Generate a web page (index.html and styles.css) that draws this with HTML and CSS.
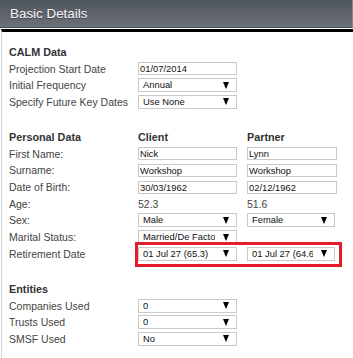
FILE: index.html
```html
<!DOCTYPE html>
<html>
<head>
<meta charset="utf-8">
<link rel="stylesheet" href="styles.css">
</head>
<body>
<div class="panel">
  <div class="hdr">Basic Details</div>
  <div class="content">
    <section class="sec">
      <div class="head">CALM Data</div><div></div><div></div>
      <div class="lbl">Projection Start Date</div><div class="inp">01/07/2014</div><div></div>
      <div class="lbl">Initial Frequency</div><div class="sel"><span class="txt">Annual</span><span class="arr"></span></div><div></div>
      <div class="lbl">Specify Future Key Dates</div><div class="sel"><span class="txt">Use None</span><span class="arr"></span></div><div></div>
    </section>
    <section class="sec">
      <div class="head">Personal Data</div><div class="head">Client</div><div class="head">Partner</div>
      <div class="lbl">First Name:</div><div class="inp">Nick</div><div class="inp p">Lynn</div>
      <div class="lbl">Surname:</div><div class="inp">Workshop</div><div class="inp p">Workshop</div>
      <div class="lbl">Date of Birth:</div><div class="inp">30/03/1962</div><div class="inp p">02/12/1962</div>
      <div class="lbl">Age:</div><div class="lbl">52.3</div><div class="lbl">51.6</div>
      <div class="lbl">Sex:</div><div class="sel"><span class="txt">Male</span><span class="arr"></span></div><div class="sel p"><span class="txt">Female</span><span class="arr"></span></div>
      <div class="lbl">Marital Status:</div><div class="sel"><span class="txt">Married/De Facto</span><span class="arr"></span></div><div></div>
      <div class="lbl">Retirement Date</div>
      <div class="pair">
        <div class="sel"><span class="txt">01 Jul 27 (65.3)</span><span class="arr"></span></div>
        <div class="sel p"><span class="txt">01 Jul 27 (64.6)</span><span class="arr"></span></div>
      </div>
    </section>
    <section class="sec">
      <div class="head">Entities</div><div></div><div></div>
      <div class="lbl">Companies Used</div><div class="sel"><span class="txt">0</span><span class="arr"></span></div><div></div>
      <div class="lbl">Trusts Used</div><div class="sel"><span class="txt">0</span><span class="arr"></span></div><div></div>
      <div class="lbl">SMSF Used</div><div class="sel"><span class="txt">No</span><span class="arr"></span></div><div></div>
    </section>
  </div>
</div>
</body>
</html>
```
FILE: styles.css
```css
html, body {
  margin: 0;
  padding: 0;
  background: #fff;
}
body {
  font-family: "Liberation Sans", Arial, sans-serif;
  width: 353px;
  height: 358px;
  overflow: hidden;
}
.panel {
  width: 353px;
}
.hdr {
  height: 28px;
  box-sizing: border-box;
  padding-left: 10px;
  line-height: 27px;
  font-size: 13.4px;
  color: #f6f6f6;
  text-shadow: 0 1px 0 rgba(0,0,0,0.35);
  background: linear-gradient(#4f555d, #6c7178);
  border-bottom: 1px solid #474c53;
  border-right: 1px solid #878b91;
}
.content {
  margin-top: 1px;
  border-top: 3px solid #000;
  margin-left: 1px;
  border-left: 1px solid #d4d4d4;
  padding-left: 7px;
  padding-top: 11.67px;
  height: 340px;
  box-sizing: border-box;
}
.sec {
  display: grid;
  grid-template-columns: 129px 109px 1fr;
  grid-auto-rows: 16.67px;
  align-items: center;
}
.sec + .sec {
  margin-top: 18.5px;
}
.head {
  font-weight: bold;
  font-size: 10.8px;
  color: #333;
  white-space: nowrap;
}
.lbl {
  font-size: 10.5px;
  color: #444;
  white-space: nowrap;
}
.inp {
  width: 99px;
  height: 13px;
  box-sizing: border-box;
  border: 1px solid #c9c9c9;
  font-size: 9.4px;
  line-height: 11px;
  padding-left: 1px;
  color: #111;
  white-space: nowrap;
  overflow: hidden;
}
.inp.p {
  width: 90px;
}
.sel {
  width: 99px;
  height: 14px;
  box-sizing: border-box;
  border: 1px solid #c9c9c9;
  display: flex;
  align-items: center;
  padding: 0 7px 0 4px;
  font-size: 9.4px;
  color: #111;
}
.sel.p {
  width: 88px;
}
.txt {
  flex: 1;
  min-width: 0;
  overflow: hidden;
  white-space: nowrap;
  line-height: 12px;
}
.arr {
  flex: none;
  width: 0;
  height: 0;
  margin-left: 8px;
  border-left: 3.5px solid transparent;
  border-right: 3.5px solid transparent;
  border-top: 7px solid #000;
}
.pair {
  grid-column: 2 / 4;
  display: grid;
  grid-template-columns: 109px 1fr;
  align-items: center;
  position: relative;
  height: 16.67px;
}
.pair::after {
  content: "";
  position: absolute;
  left: -3px;
  top: -3px;
  width: 207px;
  height: 25px;
  box-sizing: border-box;
  border: 3px solid #e31e2a;
}
```
